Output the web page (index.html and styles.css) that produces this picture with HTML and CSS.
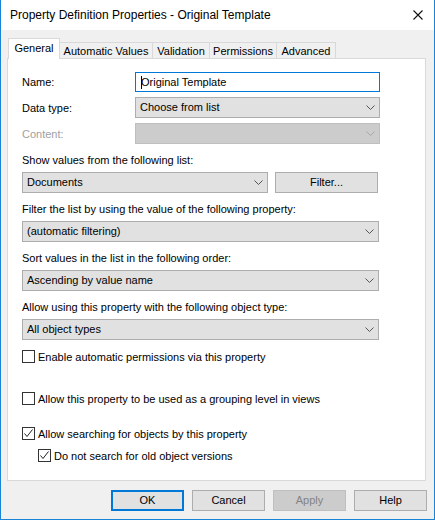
FILE: index.html
```html
<!DOCTYPE html>
<html>
<head>
<meta charset="utf-8">
<link rel="stylesheet" href="styles.css">
</head>
<body>
<div class="window">
  <div class="titlebar">
    <span class="title">Property Definition Properties - Original Template</span>
    <svg class="close" width="10" height="10" viewBox="0 0 10 10"><path d="M0.5 0.5 L9.5 9.5 M9.5 0.5 L0.5 9.5" stroke="#111" stroke-width="1.1" fill="none"/></svg>
  </div>
  <div class="client">
    <div class="tabs">
      <div class="tab active">General</div>
      <div class="tab t2">Automatic Values</div>
      <div class="tab t3">Validation</div>
      <div class="tab t4">Permissions</div>
      <div class="tab t5">Advanced</div>
    </div>
    <div class="panel">
      <div class="row">
        <span class="lbl">Name:</span>
        <div class="input"><span class="caret"></span>Original Template</div>
      </div>
      <div class="row">
        <span class="lbl">Data type:</span>
        <div class="combo wide">Choose from list<svg class="chev" width="9" height="5" viewBox="0 0 9 5"><path d="M0.5 0.5 L4.5 4.5 L8.5 0.5" stroke="#555" fill="none"/></svg></div>
      </div>
      <div class="row">
        <span class="lbl dis">Content:</span>
        <div class="combo wide disabled"><svg class="chev" width="9" height="5" viewBox="0 0 9 5"><path d="M0.5 0.5 L4.5 4.5 L8.5 0.5" stroke="#a8a8a8" fill="none"/></svg></div>
      </div>

      <div class="section first">
        <div class="slabel">Show values from the following list:</div>
        <div class="pair">
          <div class="combo docs">Documents<svg class="chev" width="9" height="5" viewBox="0 0 9 5"><path d="M0.5 0.5 L4.5 4.5 L8.5 0.5" stroke="#555" fill="none"/></svg></div>
          <div class="btn filter">Filter...</div>
        </div>
      </div>
      <div class="section">
        <div class="slabel">Filter the list by using the value of the following property:</div>
        <div class="combo full">(automatic filtering)<svg class="chev" width="9" height="5" viewBox="0 0 9 5"><path d="M0.5 0.5 L4.5 4.5 L8.5 0.5" stroke="#555" fill="none"/></svg></div>
      </div>
      <div class="section">
        <div class="slabel">Sort values in the list in the following order:</div>
        <div class="combo full">Ascending by value name<svg class="chev" width="9" height="5" viewBox="0 0 9 5"><path d="M0.5 0.5 L4.5 4.5 L8.5 0.5" stroke="#555" fill="none"/></svg></div>
      </div>
      <div class="section">
        <div class="slabel">Allow using this property with the following object type:</div>
        <div class="combo full">All object types<svg class="chev" width="9" height="5" viewBox="0 0 9 5"><path d="M0.5 0.5 L4.5 4.5 L8.5 0.5" stroke="#555" fill="none"/></svg></div>
      </div>

      <div class="check c1"><span class="box"></span>Enable automatic permissions via this property</div>
      <div class="check c2"><span class="box"></span>Allow this property to be used as a grouping level in views</div>
      <div class="check c3"><span class="box on"><svg width="11" height="11" viewBox="0 0 11 11"><path d="M1.5 5.5 L4 8.5 L9.5 1.5" stroke="#222" stroke-width="1" fill="none"/></svg></span>Allow searching for objects by this property</div>
      <div class="check c4"><span class="box on"><svg width="11" height="11" viewBox="0 0 11 11"><path d="M1.5 5.5 L4 8.5 L9.5 1.5" stroke="#222" stroke-width="1" fill="none"/></svg></span>Do not search for old object versions</div>
    </div>
    <div class="buttons">
      <div class="btn dlg default">OK</div>
      <div class="btn dlg">Cancel</div>
      <div class="btn dlg disabledbtn">Apply</div>
      <div class="btn dlg">Help</div>
    </div>
  </div>
</div>
</body>
</html>
```
FILE: styles.css
```css
html, body {
  margin: 0;
  padding: 0;
  background: #f0f0f0;
}
body {
  font-family: "Liberation Sans", Arial, sans-serif;
  font-size: 11px;
  color: #000;
}
.window {
  width: 433px;
  height: 519px;
  border: 1px solid #1883d7;
  border-top: none;
  background: #f0f0f0;
  display: flex;
  flex-direction: column;
}
.titlebar {
  height: 30px;
  background: #fff;
  display: flex;
  align-items: center;
  justify-content: space-between;
  padding: 0 11px 0 9px;
}
.title {
  font-size: 12px;
  color: #000;
}
.close { display: block; }
.client {
  padding: 8px 7px 0 6px;
  display: flex;
  flex-direction: column;
}
.tabs {
  display: flex;
  height: 20px;
  align-items: flex-end;
  position: relative;
  z-index: 1;
  margin-left: 1px;
}
.tab {
  height: 16px;
  line-height: 16px;
  border: 1px solid #d9d9d9;
  border-bottom: none;
  border-left: none;
  background: #f0f0f0;
  text-align: center;
  box-sizing: border-box;
}
.tab.active {
  height: 21px;
  line-height: 19px;
  background: #fff;
  border-left: 1px solid #d9d9d9;
  width: 52px;
  margin-bottom: -1px;
}
.t2 { width: 93px; }
.t3 { width: 57px; }
.t4 { width: 67px; }
.t5 { width: 59px; }
.panel {
  width: 419px;
  height: 423px;
  background: #fff;
  border: 1px solid #d9d9d9;
  box-sizing: border-box;
  padding: 12px 0 0 14px;
}
.row {
  display: flex;
  align-items: center;
  height: 21px;
  margin-bottom: 5px;
}
.lbl {
  width: 113px;
}
.lbl.dis { color: #a0a0a0; }
.input {
  width: 245px;
  height: 20px;
  box-sizing: border-box;
  border: 1px solid #0078d7;
  background: #fff;
  line-height: 18px;
  padding-left: 5px;
  position: relative;
}
.caret {
  position: absolute;
  left: 5px;
  top: 3px;
  width: 1px;
  height: 13px;
  background: #000;
}
.combo {
  height: 21px;
  box-sizing: border-box;
  border: 1px solid #adadad;
  background: #e1e1e1;
  line-height: 19px;
  padding-left: 4px;
  position: relative;
}
.combo.wide { width: 245px; }
.combo.full { width: 357px; }
.combo.docs { width: 246px; }
.combo.disabled {
  background: #cccccc;
  border-color: #bfbfbf;
}
.chev {
  position: absolute;
  right: 4px;
  top: 7px;
  display: block;
}
.section {
  margin-top: 8px;
}
.section.first { margin-top: 8px; }
.slabel {
  height: 16px;
  line-height: 16px;
  margin-bottom: 4px;
}
.pair {
  display: flex;
  gap: 7px;
}
.btn {
  height: 21px;
  box-sizing: border-box;
  border: 1px solid #adadad;
  background: #e1e1e1;
  text-align: center;
  line-height: 19px;
}
.btn.filter { width: 103px; }
.check {
  display: flex;
  align-items: center;
  height: 15px;
}
.box {
  width: 13px;
  height: 13px;
  box-sizing: border-box;
  border: 1px solid #333;
  background: #fff;
  margin-right: 3px;
  display: flex;
  align-items: center;
  justify-content: center;
}
.box svg { display: block; }
.c1 { margin-top: 9px; }
.c2 { margin-top: 27px; }
.c3 { margin-top: 20px; }
.c4 { margin-top: 7px; margin-left: 16px; }
.buttons {
  display: flex;
  justify-content: flex-end;
  gap: 8px;
  margin-top: 9px;
}
.btn.dlg {
  width: 73px;
  height: 21px;
}
.btn.default {
  border: 2px solid #0078d7;
  line-height: 17px;
}
.btn.disabledbtn {
  background: #cccccc;
  border-color: #bfbfbf;
  color: #838383;
}
```
